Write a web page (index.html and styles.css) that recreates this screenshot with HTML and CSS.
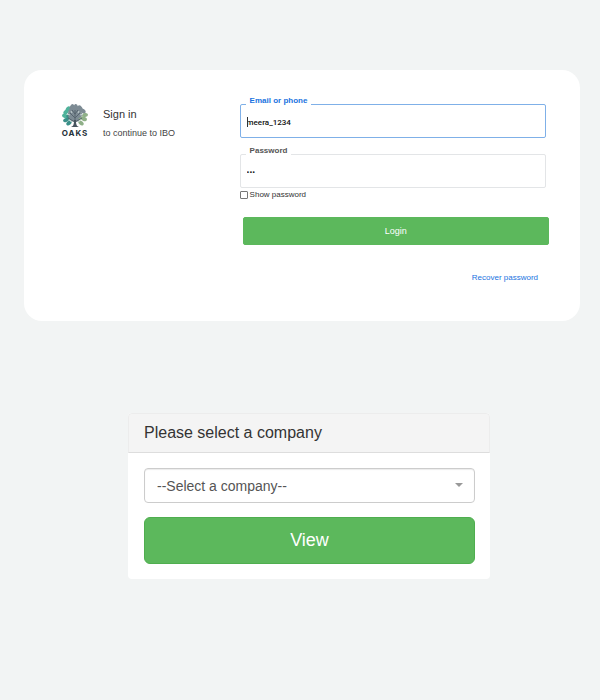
FILE: index.html
```html
<!DOCTYPE html>
<html lang="en">
<head>
    <meta charset="UTF-8">
    <meta name="viewport" content="width=device-width, initial-scale=1.0">
    <title>Oaks - Sign in</title>
    <link rel="stylesheet" href="styles.css">
</head>
<body>
    <main class="page">
        <!-- Login -->
        <section class="login-card">
            <div class="brand">
                <div class="logo">
                    <svg class="logo-tree" viewBox="0 0 26 24" aria-hidden="true">
                        <!-- Leaves -->
                        <g fill="#4fb39b">
                            <ellipse cx="4" cy="8" rx="3" ry="2" transform="rotate(-35 4 8)"/>
                            <ellipse cx="3" cy="12" rx="3" ry="2" transform="rotate(15 3 12)"/>
                            <ellipse cx="6" cy="5" rx="3" ry="2" transform="rotate(-55 6 5)"/>
                        </g>
                        <g fill="#3b8f88">
                            <ellipse cx="4" cy="16" rx="3" ry="2" transform="rotate(-25 4 16)"/>
                            <ellipse cx="7" cy="19" rx="3" ry="2" transform="rotate(-40 7 19)"/>
                            <ellipse cx="7" cy="13" rx="3" ry="2" transform="rotate(30 7 13)"/>
                        </g>
                        <g fill="#7d8b94">
                            <ellipse cx="10" cy="3" rx="3" ry="2" transform="rotate(-60 10 3)"/>
                            <ellipse cx="14" cy="3" rx="3" ry="2" transform="rotate(80 14 3)"/>
                            <ellipse cx="18" cy="4" rx="3" ry="2" transform="rotate(50 18 4)"/>
                            <ellipse cx="13" cy="10" rx="7" ry="8"/>
                            <ellipse cx="21" cy="7" rx="3" ry="2" transform="rotate(35 21 7)"/>
                        </g>
                        <g fill="#8fb088">
                            <ellipse cx="23" cy="11" rx="3" ry="2" transform="rotate(-10 23 11)"/>
                            <ellipse cx="22" cy="15" rx="3" ry="2" transform="rotate(20 22 15)"/>
                            <ellipse cx="19" cy="19" rx="3" ry="2" transform="rotate(40 19 19)"/>
                            <ellipse cx="19" cy="14" rx="3" ry="1" transform="rotate(-30 19 14)"/>
                        </g>
                        <!-- Trunk and branches -->
                        <path d="M13 23V6M13 18L6 14M13 18L20 14M13 14L8 9M13 14L18 9M13 10L10 6M13 10L16 6" fill="none" stroke="#56646e" stroke-width="1"/>
                        <path d="M9 23C12 22 12 19 12 16H14C14 19 14 22 17 23Z" fill="#48555f"/>
                        <path d="M5 10L8 11M18 11L21 10M9 7L10 9M16 9L17 7M8 17L10 18M16 18L18 17" stroke="#c5d2d2" stroke-width="1"/>
                    </svg>
                    <span class="logo-name">OAKS</span>
                </div>
                <div class="intro">
                    <h1>Sign in</h1>
                    <p>to continue to IBO</p>
                </div>
            </div>

            <form class="login-form">
                <div class="field field-active">
                    <label for="email">Email or phone</label>
                    <input type="text" id="email" value="meera_1234">
                    <span class="caret"></span>
                </div>
                <div class="field">
                    <label for="password">Password</label>
                    <input type="password" id="password" value="123">
                </div>
                <div class="show-password">
                    <input type="checkbox" id="showPassword">
                    <label for="showPassword">Show password</label>
                </div>
                <button type="submit" class="btn btn-login">Login</button>
                <a href="#" class="recover">Recover password</a>
            </form>
        </section>

        <!-- Company selection -->
        <section class="panel">
            <h2 class="panel-heading"><label for="company">Please select a company</label></h2>
            <form class="panel-body">
                <div class="select-wrap">
                    <select id="company">
                        <option>--Select a company--</option>
                    </select>
                </div>
                <button type="submit" class="btn btn-view">View</button>
            </form>
        </section>
    </main>

    <script>
        const password = document.getElementById('password');

        // Toggle password visibility
        document.getElementById('showPassword').addEventListener('change', (e) => {
            password.type = e.target.checked ? 'text' : 'password';
        });
    </script>
</body>
</html>
```
FILE: styles.css
```css
:root {
    --page-bg: #f2f4f4;
    --green: #5cb85c;
    --blue: #1a73e0;
    --text: #333;
}

* {
    box-sizing: border-box;
}

body {
    margin: 0;
    background-color: var(--page-bg);
    color: var(--text);
    font-family: "Liberation Sans", Arial, sans-serif;
    font-size: 8px;
}

h1,
h2,
p {
    margin: 0;
    font-weight: 400;
}

input,
select,
button {
    font-family: inherit;
}

.page {
    padding: 70px 20px 40px 24px;
}

/* Login card */
.login-card {
    display: grid;
    grid-template-columns: 2fr 3fr;
    padding: 34px 34px 38px 38px;
    background-color: white;
    border-radius: 18px;
}

.brand {
    display: flex;
    align-items: flex-start;
    gap: 15px;
}

.logo {
    display: flex;
    flex-direction: column;
    align-items: center;
    width: 26px;
}

.logo-tree {
    display: block;
    width: 26px;
    height: 24px;
}

.logo-name {
    color: #26323a;
    font-family: Inter, sans-serif;
    font-size: 8px;
    font-weight: 700;
    line-height: 10px;
    letter-spacing: 1px;
}

.intro {
    padding-top: 2px;
}

.intro h1 {
    font-size: 11px;
    line-height: 16px;
}

.intro p {
    margin-top: 6px;
    color: #444;
    font-size: 9px;
    line-height: 10px;
}

.login-form {
    display: flex;
    flex-direction: column;
    margin-left: -16px;
}

/* Outlined text fields */
.field {
    position: relative;
    margin-bottom: 16px;
}

.field label {
    position: absolute;
    top: -8px;
    left: 6px;
    padding: 0 4px;
    background-color: white;
    color: #555;
    font-weight: 700;
    line-height: 10px;
}

.field input {
    display: block;
    width: 100%;
    height: 34px;
    padding: 2px 6px 0;
    border: 1px solid #e3e5e7;
    border-radius: 2px;
    outline: none;
    background-color: white;
    color: #111;
    font-family: Roboto, sans-serif;
    font-size: 8px;
    font-weight: 500;
}

.field-active label {
    color: var(--blue);
}

.field-active input {
    border-color: #7fb0e8;
}

.caret {
    position: absolute;
    top: 13px;
    left: 7px;
    width: 1px;
    height: 10px;
    background-color: #333;
}

.show-password {
    display: flex;
    align-items: center;
    gap: 2px;
    margin-top: -14px;
    line-height: 10px;
}

.show-password input {
    appearance: none;
    width: 8px;
    height: 8px;
    margin: 0;
    border: 1px solid #777;
    border-radius: 1px;
    background-color: white;
}

.show-password input:checked {
    background-color: var(--blue);
}

/* Buttons */
.btn {
    border: 1px solid #4fae4f;
    background-color: var(--green);
    color: white;
    cursor: pointer;
}

.btn-login {
    height: 28px;
    margin: 17px -3px 0 3px;
    padding: 0;
    border-color: var(--green);
    border-radius: 2px;
    font-size: 9px;
}

.recover {
    align-self: flex-end;
    margin: 28px 8px 0 0;
    color: var(--blue);
    line-height: 10px;
    text-decoration: none;
}

/* Company panel */
.panel {
    margin: 92px 90px 0 104px;
    border-radius: 4px;
    background-color: white;
    overflow: hidden;
}

.panel-heading {
    padding: 0 15px;
    border: 1px solid #ececec;
    border-bottom-color: #ddd;
    border-radius: 4px 4px 0 0;
    background-color: #f4f4f4;
    font-size: 16px;
    line-height: 38px;
}

.panel-body {
    padding: 15px 15px 15px 16px;
}

.select-wrap {
    position: relative;
}

.select-wrap::after {
    content: "";
    position: absolute;
    top: 15px;
    right: 12px;
    border: 4px solid transparent;
    border-top-color: #999;
    border-bottom-width: 0;
    pointer-events: none;
}

select {
    appearance: none;
    display: block;
    width: 100%;
    height: 35px;
    padding: 0 28px 0 12px;
    border: 1px solid #ccc;
    border-radius: 4px;
    background-color: white;
    box-shadow: inset 0 1px 1px rgba(0, 0, 0, 0.08);
    color: #555;
    font-size: 14px;
}

.btn-view {
    width: 100%;
    height: 47px;
    margin-top: 14px;
    border-radius: 6px;
    font-size: 18px;
}

@media (max-width: 500px) {
    .login-card {
        grid-template-columns: 1fr;
        gap: 24px;
    }

    .login-form {
        margin-left: 0;
    }

    .panel {
        margin: 40px 0 0;
    }
}
```
